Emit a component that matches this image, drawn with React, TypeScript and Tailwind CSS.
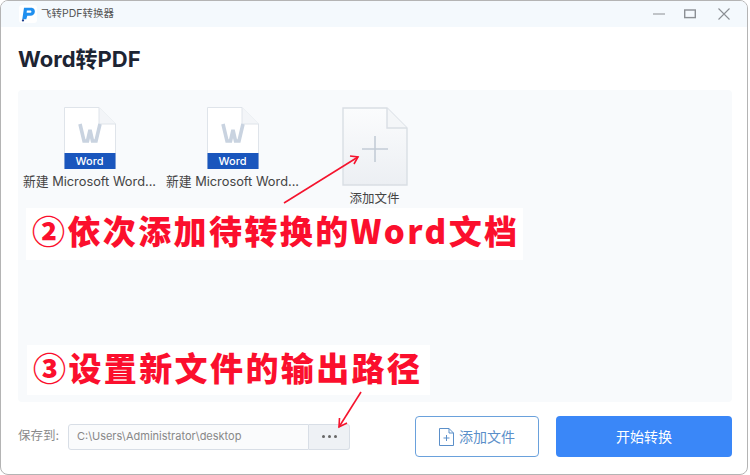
import React from "react";

const font = { fontFamily: '"Inter","Noto Sans CJK SC",sans-serif' };
const cjk = { fontFamily: '"Noto Sans CJK SC",sans-serif' };

function WordFile() {
  return (
    <svg width="52" height="62" viewBox="0 0 52 62">
      <path d="M0.5 0.5H35L51.5 17V61.5H0.5Z" fill="#ffffff" stroke="#dfe4ea" />
      <path d="M35 0.5V17H51.5" fill="#f3f5f8" stroke="#dfe4ea" />
      <path d="M16 17L20 34H23.5L26 23L28.5 34H32L36 17" fill="none" stroke="#c9d3e0" strokeWidth="3.6" />
      <rect x="0.5" y="46" width="51" height="16" fill="#1a56bd" />
    </svg>
  );
}

function FileItem() {
  return (
    <div className="w-[143px] flex flex-col items-center shrink-0">
      <div className="relative h-[62px]">
        <WordFile />
        <span className="absolute left-0 right-0 bottom-0 h-[16px] leading-[16px] text-center text-[11px] font-medium text-white">Word</span>
      </div>
      <div className="mt-[4px] text-[12.8px] leading-[18px] text-[#444] whitespace-nowrap">新建 Microsoft Word...</div>
    </div>
  );
}

function Annotation({ className, children }: { className: string; children: React.ReactNode }) {
  return (
    <div style={cjk} className={`absolute bg-white text-[#fb0f2d] font-black text-[33px] tracking-[2.4px] leading-[45px] whitespace-nowrap pl-[6px] ${className}`}>
      {children}
    </div>
  );
}

export default function App() {
  return (
    <div className="w-[750px] h-[475px] bg-white relative overflow-hidden" style={font}>
      <div className="w-[748px] h-[475px] border border-[#b4b4b4] rounded-[8px] overflow-hidden flex flex-col bg-white">
        <div className="h-[26px] bg-[#f4f9fd] flex items-center shrink-0">
          <div className="ml-[18px] w-[18px] h-[18px] bg-white rounded-[3px] flex items-center justify-center">
            <svg width="16" height="16" viewBox="0 0 14 14">
              <path d="M3.5 1.5H9.5C12.5 1.5 13 3.5 13 4.8C13 7 11.5 8.5 9 8.5H6.4L5.5 11.5H2Z M6 4L5.8 6H8.5C9.5 6 10 5.5 10 5C10 4.4 9.5 4 8.6 4Z" fill="#1f8fef" fillRule="evenodd" />
              <circle cx="2.6" cy="12.6" r="1" fill="#1b3f8f" />
            </svg>
          </div>
          <span className="ml-[4px] text-[10.5px] text-[#555]">飞转PDF转换器</span>
          <div className="ml-auto flex items-center text-[#8b8f94]">
            <svg className="mr-[19px]" width="12" height="12" viewBox="0 0 12 12"><path d="M0 6H12" stroke="currentColor" strokeWidth="1.2" /></svg>
            <svg className="mr-[22px]" width="12" height="10" viewBox="0 0 12 10"><rect x="0.7" y="1" width="10.6" height="7.6" fill="none" stroke="currentColor" strokeWidth="1.4" /></svg>
            <svg className="mr-[17px]" width="12" height="12" viewBox="0 0 12 12"><path d="M0.5 0.5L11.5 11.5M11.5 0.5L0.5 11.5" stroke="currentColor" strokeWidth="1.1" /></svg>
          </div>
        </div>

        <h1 className="mt-[18px] ml-[17px] text-[22px] leading-[28px] font-bold text-[#1d2433]">Word转PDF</h1>

        <div className="mt-[17px] ml-[17px] w-[714px] h-[312px] bg-[#f8fafc] rounded-[4px] pt-[17px] flex items-start shrink-0">
          <FileItem />
          <FileItem />
          <div className="ml-[-1px] w-[143px] flex flex-col items-center shrink-0">
            <svg width="66" height="79" viewBox="0 0 66 79">
              <defs>
                <linearGradient id="g" x1="0" y1="0" x2="0" y2="1">
                  <stop offset="0" stopColor="#fbfcfd" />
                  <stop offset="1" stopColor="#eceff3" />
                </linearGradient>
              </defs>
              <path d="M1 1H45L65 21V78H1Z" fill="url(#g)" stroke="#d9dee4" strokeWidth="1.4" />
              <path d="M45 1V21H65" fill="#f4f6f8" stroke="#d9dee4" strokeWidth="1.4" />
              <path d="M33 29V55M20 42H46" stroke="#c3ccd6" strokeWidth="1.6" />
            </svg>
            <div className="mt-[4px] text-[12.5px] leading-[18px] text-[#444]">添加文件</div>
          </div>
        </div>

        <div className="mt-[14px] pl-[17px] flex items-center">
          <span className="w-[50px] text-[12.5px] text-[#8a8a8a] whitespace-nowrap">保存到:</span>
          <div className="w-[241px] h-[26px] border border-[#d8dee6] rounded-l-[3px] bg-[#fafbfc] flex items-center pl-[8px] text-[11px] text-[#888]">
            C:\Users\Administrator\desktop
          </div>
          <div className="w-[41px] h-[26px] border border-l-0 border-[#d8dee6] rounded-r-[3px] bg-[#eef1f5] flex items-center justify-center gap-[3px]">
            <i className="w-[3px] h-[3px] rounded-full bg-[#666]" />
            <i className="w-[3px] h-[3px] rounded-full bg-[#666]" />
            <i className="w-[3px] h-[3px] rounded-full bg-[#666]" />
          </div>
          <button className="ml-[65px] w-[124px] h-[41px] border border-[#6aa1dc] rounded-[4px] bg-white flex items-center justify-center gap-[5px] text-[14px] text-[#5b8fc9]">
            <svg width="15" height="18" viewBox="0 0 15 18" fill="none" stroke="#5b8fc9">
              <path d="M0.5 0.5H10L14.5 5V17.5H0.5Z M10 0.5V5H14.5" />
              <path d="M4.5 10H10.5M7.5 7V13" />
            </svg>
            添加文件
          </button>
          <button className="ml-[17px] w-[176px] h-[41px] rounded-[4px] bg-[#3a87f8] text-[14px] text-white">开始转换</button>
        </div>
      </div>

      <Annotation className="left-[26px] top-[208px] w-[497px] h-[52px]">②依次添加待转换的Word文档</Annotation>
      <Annotation className="left-[27px] top-[345px] w-[403px] h-[50px]">③设置新文件的输出路径</Annotation>

      <svg className="absolute left-0 top-0 pointer-events-none" width="750" height="475" viewBox="0 0 750 475" fill="none" stroke="#f5142e" strokeWidth="1.6">
        <path d="M284 203L358 157" />
        <path d="M350 156L358 157L354 164" />
        <path d="M361 392L339 427" />
        <path d="M339.5 418L339 427L347 423" />
      </svg>
    </div>
  );
}
